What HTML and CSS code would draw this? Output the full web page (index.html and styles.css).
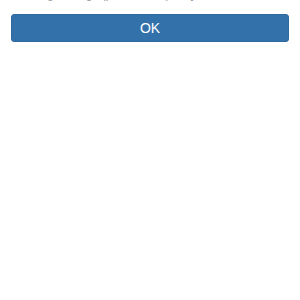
FILE: index.html
```html
<!DOCTYPE html>
<html>
<head>
<meta charset="utf-8">
<link rel="stylesheet" href="styles.css">
</head>
<body>
<div class="page">
  <p class="note">Loading settings (please wait) for your</p>
  <button class="btn">OK</button>
</div>
</body>
</html>
```
FILE: styles.css
```css
html, body {
  margin: 0;
  padding: 0;
  background: #ffffff;
}
.page {
  padding: 0 11px;
  font-family: "Liberation Sans", Arial, sans-serif;
}
.note {
  margin: -13px 0 0 0;
  font-size: 12px;
  line-height: 14px;
  color: #9a9a9a;
  white-space: nowrap;
  overflow: hidden;
}
.btn {
  display: block;
  width: 100%;
  height: 28px;
  margin-top: 13px;
  padding: 0;
  background: #3371aa;
  border: 1px solid #2f6a9f;
  border-radius: 3px;
  color: #ffffff;
  font-family: "Liberation Sans", Arial, sans-serif;
  font-size: 14px;
  line-height: 26px;
  text-align: center;
}
```
